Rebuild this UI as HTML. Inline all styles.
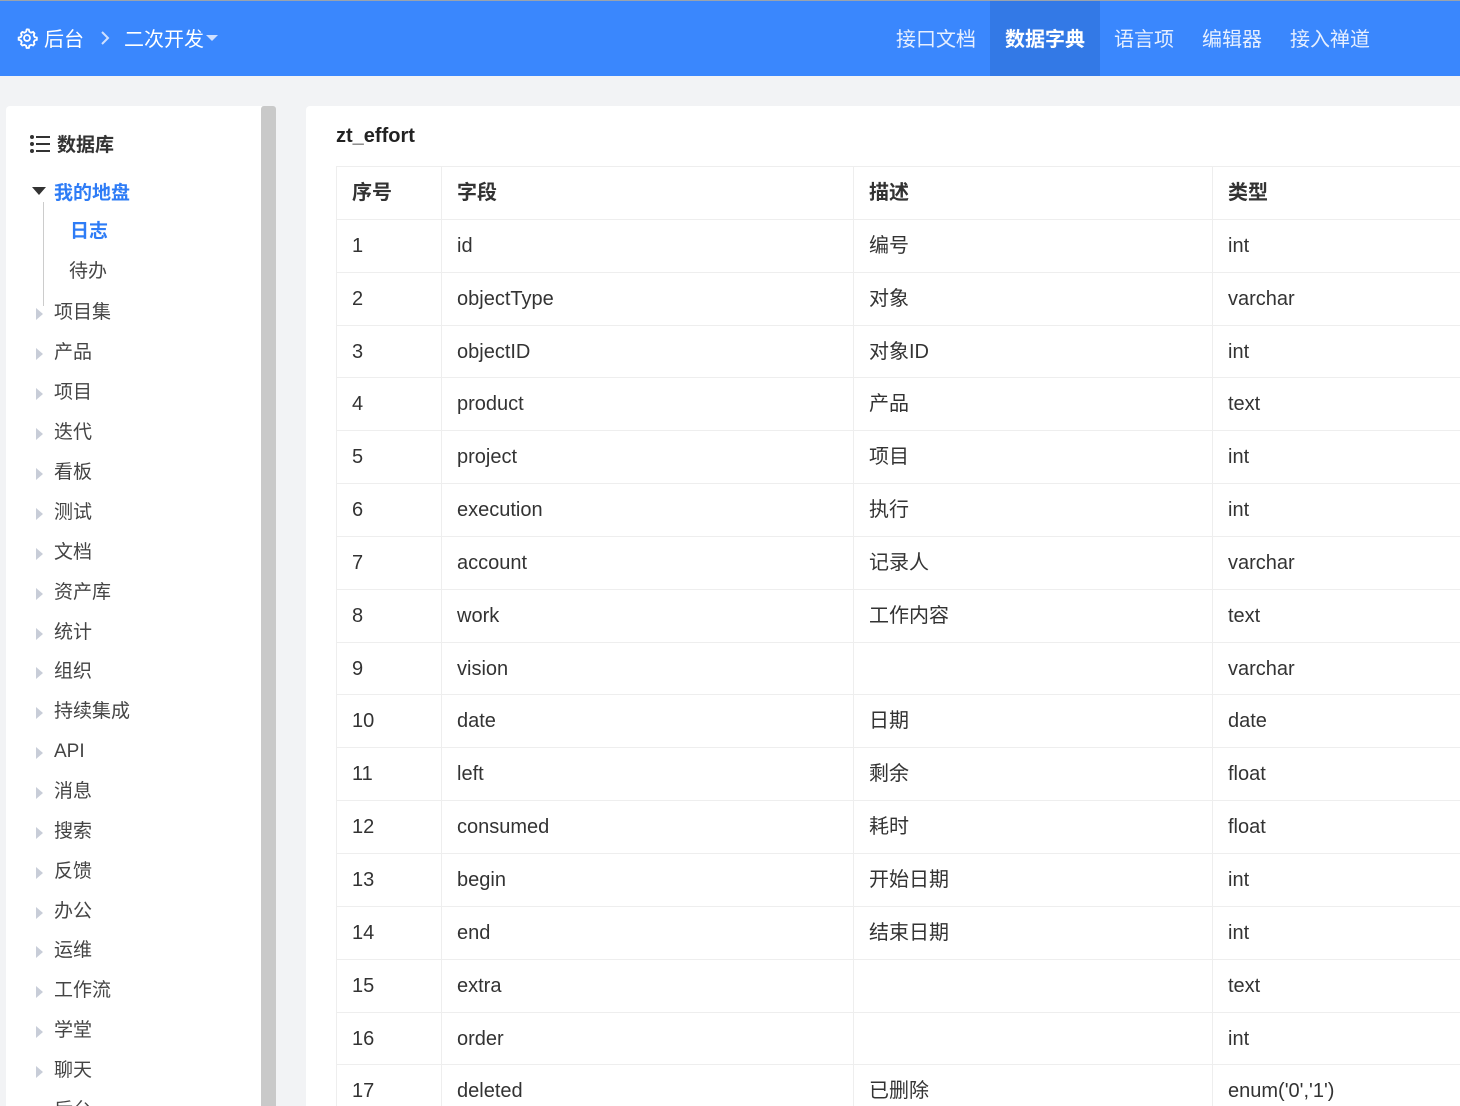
<!DOCTYPE html>
<html><head><meta charset="utf-8"><style>
*{margin:0;padding:0;box-sizing:border-box}
html,body{width:1460px;height:1106px;overflow:hidden}
body{background:#f2f3f5;font-family:"Liberation Sans","Noto Sans CJK SC",sans-serif;color:#333;position:relative}
.top{position:absolute;left:0;top:0;width:1460px;height:76px;background:#3a87fd;border-top:1px solid #9aa3ad}
.top .l{position:absolute;left:16px;top:22px;color:#fff;font-size:20px;display:flex;align-items:center;gap:6px}
.nav{position:absolute;right:0;top:0;height:75px;display:flex}
.nav div{color:#e6efff;font-size:20px;line-height:75px;padding:0 14px}
.nav div.a{background:#3379e6;color:#fff;font-weight:bold;padding:0 15px}
.side{position:absolute;left:6px;top:106px;width:256px;height:1000px;background:#fff;border-radius:4px 0 0 0}
.sb{position:absolute;left:261px;top:106px;width:15px;height:1000px;background:#c9c9c9;border-radius:3px 3px 0 0}
.side .t{position:absolute;left:23px;top:24px;font-size:19px;font-weight:bold;color:#333;display:flex;align-items:center;gap:6px}
.it{position:absolute;left:48px;font-size:19px;color:#444;line-height:24px}
.it:before{content:"";position:absolute;left:-18px;top:7px;border-left:7px solid #c8cdd8;border-top:6px solid transparent;border-bottom:6px solid transparent}
.main{position:absolute;left:306px;top:106px;width:1160px;height:1000px;background:#fff;border-radius:4px 0 0 0}
h1{position:absolute;left:336px;top:125px;font-size:20px;font-weight:bold;color:#222}
.tb{position:absolute;left:336px;top:166px;width:1130px;height:950px;border-left:1px solid #eee}
.r{position:absolute;left:337px;width:1129px;height:54px;border-top:1px solid #eee;display:flex}
.r div{height:52px;line-height:52px;font-size:20px;padding-left:15px;color:#333;border-right:1px solid #eee}
.r div:nth-child(1){width:105px}.r div:nth-child(2){width:412px}.r div:nth-child(3){width:359px}.r div:nth-child(4){flex:1;border:none}
.h div{font-weight:bold}
</style></head><body>
<div class="top">
<div class="l"><svg width="22" height="22" viewBox="0 0 24 24" fill="none" stroke="#fff" stroke-width="2"><circle cx="12" cy="12" r="3.2"/><path d="M12 2.5l2 .3.6 2.3 1.8 1 2.3-.7 1.4 1.5-.7 2.3 1 1.8 2.3.6v2.4l-2.3.6-1 1.8.7 2.3-1.4 1.5-2.3-.7-1.8 1-.6 2.3h-2.4l-.6-2.3-1.8-1-2.3.7-1.4-1.5.7-2.3-1-1.8-2.3-.6v-2.4l2.3-.6 1-1.8-.7-2.3 1.4-1.5 2.3.7 1.8-1 .6-2.3z"/></svg><span>后台</span><svg style="margin:0 8px 0 10px" width="10" height="16" viewBox="0 0 10 16"><path d="M2 2l6 6-6 6" fill="none" stroke="#cfe0ff" stroke-width="2"/></svg><span>二次开发</span><span style="border-top:6px solid #cfe0ff;border-left:6px solid transparent;border-right:6px solid transparent;width:0;height:0;margin-left:-4px"></span></div>
<div class="nav" style="top:2px"><div style="padding-left:0">接口文档</div><div class="a" style="margin-top:-2px;line-height:75px;height:75px;padding-top:2px">数据字典</div><div>语言项</div><div>编辑器</div><div style="padding-right:90px">接入禅道</div></div>
</div>
<div class="side">
<div class="t"><svg width="22" height="20" viewBox="0 0 22 20"><g fill="#333"><circle cx="3" cy="3" r="2"/><circle cx="3" cy="10" r="2"/><circle cx="3" cy="17" r="2"/><rect x="7" y="2" width="14" height="2"/><rect x="7" y="9" width="14" height="2"/><rect x="7" y="16" width="14" height="2"/></g></svg>数据库</div>
<div style="position:absolute;left:26px;top:81px;border-top:8px solid #333;border-left:7px solid transparent;border-right:7px solid transparent"></div>
<div style="position:absolute;left:48px;top:72px;font-size:19px;font-weight:bold;color:#2e7cf6">我的地盘</div>
<div style="position:absolute;left:37px;top:96px;width:1px;height:104px;background:#ccc"></div>
<div style="position:absolute;left:64px;top:110px;font-size:19px;font-weight:bold;color:#2e7cf6">日志</div>
<div style="position:absolute;left:63px;top:150px;font-size:19px;color:#444">待办</div>
<div class="it" style="top:195px">项目集</div><div class="it" style="top:235px">产品</div><div class="it" style="top:275px">项目</div><div class="it" style="top:315px">迭代</div><div class="it" style="top:355px">看板</div><div class="it" style="top:395px">测试</div><div class="it" style="top:435px">文档</div><div class="it" style="top:475px">资产库</div><div class="it" style="top:515px">统计</div><div class="it" style="top:554px">组织</div><div class="it" style="top:594px">持续集成</div><div class="it" style="top:634px">API</div><div class="it" style="top:674px">消息</div><div class="it" style="top:714px">搜索</div><div class="it" style="top:754px">反馈</div><div class="it" style="top:794px">办公</div><div class="it" style="top:833px">运维</div><div class="it" style="top:873px">工作流</div><div class="it" style="top:913px">学堂</div><div class="it" style="top:953px">聊天</div><div class="it" style="top:993px">后台</div>
</div>
<div class="sb"></div>
<div class="main"></div>
<h1>zt_effort</h1>
<div class="tb"></div>
<div class="r h" style="top:166px"><div>序号</div><div>字段</div><div>描述</div><div>类型</div></div>
<div class="r" style="top:219px"><div>1</div><div>id</div><div>编号</div><div>int</div></div>
<div class="r" style="top:272px"><div>2</div><div>objectType</div><div>对象</div><div>varchar</div></div>
<div class="r" style="top:325px"><div>3</div><div>objectID</div><div>对象ID</div><div>int</div></div>
<div class="r" style="top:377px"><div>4</div><div>product</div><div>产品</div><div>text</div></div>
<div class="r" style="top:430px"><div>5</div><div>project</div><div>项目</div><div>int</div></div>
<div class="r" style="top:483px"><div>6</div><div>execution</div><div>执行</div><div>int</div></div>
<div class="r" style="top:536px"><div>7</div><div>account</div><div>记录人</div><div>varchar</div></div>
<div class="r" style="top:589px"><div>8</div><div>work</div><div>工作内容</div><div>text</div></div>
<div class="r" style="top:642px"><div>9</div><div>vision</div><div></div><div>varchar</div></div>
<div class="r" style="top:694px"><div>10</div><div>date</div><div>日期</div><div>date</div></div>
<div class="r" style="top:747px"><div>11</div><div>left</div><div>剩余</div><div>float</div></div>
<div class="r" style="top:800px"><div>12</div><div>consumed</div><div>耗时</div><div>float</div></div>
<div class="r" style="top:853px"><div>13</div><div>begin</div><div>开始日期</div><div>int</div></div>
<div class="r" style="top:906px"><div>14</div><div>end</div><div>结束日期</div><div>int</div></div>
<div class="r" style="top:959px"><div>15</div><div>extra</div><div></div><div>text</div></div>
<div class="r" style="top:1012px"><div>16</div><div>order</div><div></div><div>int</div></div>
<div class="r" style="top:1064px"><div>17</div><div>deleted</div><div>已删除</div><div>enum('0','1')</div></div>
</body></html>
